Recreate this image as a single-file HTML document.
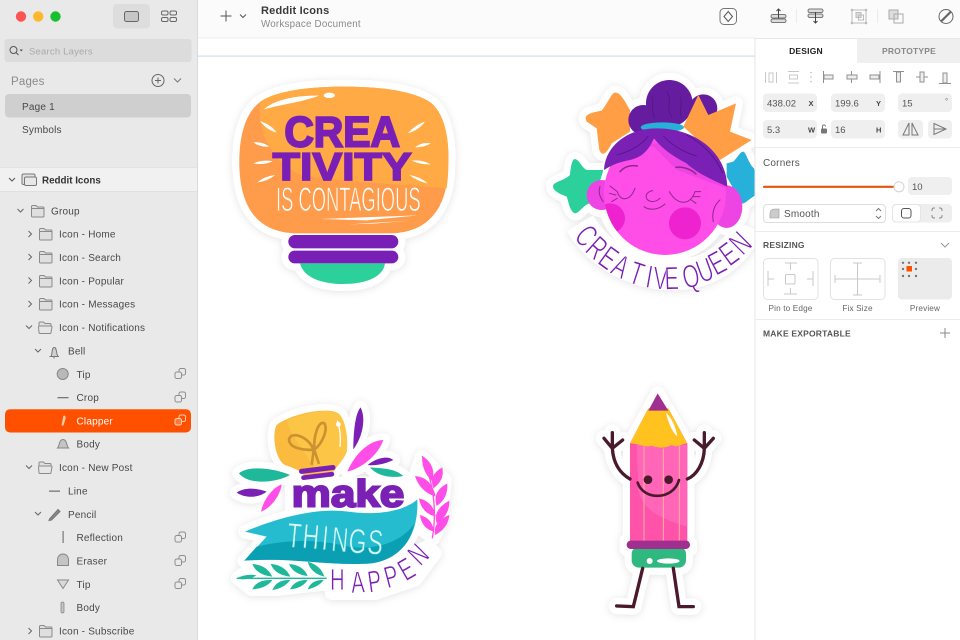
<!DOCTYPE html>
<html><head><meta charset="utf-8"><title>Reddit Icons</title>
<style>
html,body{margin:0;padding:0;background:#fff;width:960px;height:640px;overflow:hidden}
svg{display:block;font-family:"Liberation Sans",sans-serif;filter:blur(.3px)}
.r{font-size:10px;fill:#484848;letter-spacing:.2px}
.s{font-size:9.5px;fill:#555}
.cap{font-size:8.5px;fill:#555;font-weight:bold;letter-spacing:.2px}
.lb{font-size:8.2px;fill:#666;letter-spacing:.15px}
</style></head><body>
<svg width="960" height="640" viewBox="0 0 960 640" xmlns="http://www.w3.org/2000/svg">
<defs>
<g id="f"><path d="M.5 11V1.5a1 1 0 0 1 1-1h3.500l1.500 1.500h5.500a1 1 0 0 1 1 1V11a1 1 0 0 1-1 1H1.500a1 1 0 0 1-1-1z" fill="#dfdfdf" stroke="#8a8a8a"/><path d="M.5 3.500H13" stroke="#8a8a8a"/></g>
<g id="fo"><path d="M1 11V1.500a1 1 0 0 1 1-1h3.500l1.500 1.500h5a1 1 0 0 1 1 1v1" fill="#dfdfdf" stroke="#8a8a8a"/><path d="M.5 5.500a1 1 0 0 1 1-1h11.500a1 1 0 0 1 1 1L13 11a1 1 0 0 1-1 1H2a1 1 0 0 1-1-1z" fill="#e6e6e6" stroke="#8a8a8a"/></g>
<g id="c" fill="none" stroke="#8e8e8e"><rect x="4.500" y=".5" width="6.500" height="6.500" rx="1.800"/><rect x=".5" y="4" width="6.500" height="6.500" rx="1.800" fill="#e9e9e9"/></g>
<filter id="sh" x="-20%" y="-20%" width="140%" height="140%"><feDropShadow dx="0" dy="3" stdDeviation="12" flood-color="#000" flood-opacity=".11"/></filter>

<g id="s1shape">
<path d="M430 80C530 80 640 90 695 130C735 165 748 240 745 310C745 440 690 518 570 520H290C170 518 122 440 118 320C116 230 135 165 175 130C225 92 330 80 430 80Z"/>
<rect x="265" y="525" width="330" height="40" rx="20"/><rect x="265" y="572" width="330" height="38" rx="19"/>
<path d="M300 610H555C550 650 500 672 430 672C360 672 310 650 300 610Z"/>
</g>
<g id="s2shape">
<path d="M258 98C275 100 290 135 300 150L300 215L245 250C225 290 215 285 208 270L200 205L170 185C160 165 175 160 215 152C240 120 245 95 258 98Z"/>
<circle cx="418" cy="130" r="70"/><circle cx="340" cy="180" r="45"/><circle cx="520" cy="145" r="42"/>
<path d="M505 105L535 165L618 130L600 215L665 240L570 300L460 200Z"/>
<path d="M640 275C650 280 655 310 672 325L690 400C660 410 645 435 635 430L590 350V310L610 305C625 290 630 275 640 275Z"/>
<path d="M135 297C150 300 155 325 172 330H220L190 430C165 425 150 460 135 460C118 455 115 420 110 410C85 400 65 390 70 375C75 365 105 360 120 345C122 325 125 297 135 297Z"/>
<ellipse cx="405" cy="395" rx="185" ry="190"/><circle cx="215" cy="405" r="45"/><ellipse cx="590" cy="440" rx="47" ry="64"/>
<path d="M150 490C220 610 350 645 430 645C520 645 610 600 655 500" fill="none" stroke-width="92"/>
</g>
<g id="s3shape">
<path d="M185 105C230 70 340 50 370 70C395 90 400 160 395 185C385 215 355 235 350 260L270 265C265 245 250 240 210 225C180 210 170 130 185 105Z"/>
<path d="M437 52C455 90 440 145 415 178C415 130 420 70 437 52Z"/>
<path d="M397 245C420 190 465 150 505 150C490 195 440 235 397 245Z"/>
<path d="M458 225C480 205 520 195 535 210C510 222 480 228 458 225Z"/>
<path d="M465 232C500 235 540 235 565 258C530 265 490 260 465 232Z"/>
<path d="M72 250C100 225 180 235 225 255C180 280 100 285 72 250Z"/>
<path d="M65 308C90 290 130 295 155 305C130 325 90 325 65 308Z"/>
<path d="M230 280H570V360H230Z"/>
<path d="M90 425C170 390 300 350 400 365C470 375 560 370 607 328C610 400 590 470 520 500C470 540 300 500 88 512L155 440Z"/>
<path d="M620 200L690 270L680 390L655 445L600 400V260Z"/>
<path d="M68 565L120 525H330L340 580L180 598H110Z"/>
<path d="M345 535H500L640 470L660 490L600 570L480 610H350Z"/>
</g>
<g id="s4shape">
<path d="M233 40L322 190V490H330V507H318V540Q318 563 295 563H178Q155 563 155 540V507H140V482H150V190Z"/>
<path d="M150 297C120 280 100 250 97 205M97 205L72 175M97 205L97 158M97 205L128 180M322 297C350 285 372 250 373 205M373 205L343 180M373 205L373 158M373 205L400 175M188 563L160 680L110 678M280 563L297 680L340 680" fill="none" stroke-width="48"/>
</g>
</defs>

<!-- canvas -->
<rect width="960" height="640" fill="#fff"/>
<rect x="198" y="0" width="762" height="38" fill="#fbfbfb"/>
<rect x="198" y="37.500" width="557" height="1" fill="#ededed"/>
<rect x="198" y="55.500" width="557" height="1.200" fill="#cfdfec"/>

<!-- Sticker 1 -->
<g transform="translate(200 60) scale(.3333)">
<g fill="#fff" stroke="#fff" stroke-width="42" stroke-linejoin="round" filter="url(#sh)"><use href="#s1shape"/></g>
<path d="M430 80C530 80 640 90 695 130C735 165 748 240 745 310C745 440 690 518 570 520H290C170 518 122 440 118 320C116 230 135 165 175 130C225 92 330 80 430 80Z" fill="#fe9c4b"/>
<path d="M182 124C230 92 330 80 430 80C530 80 640 90 695 130C735 165 748 240 745 310C745 340 743 365 740 385C600 372 450 368 300 345C200 290 170 200 182 124Z" fill="#ffaa45"/>
<path d="M192 148C220 120 290 105 358 107C310 125 240 135 192 148Z" fill="#fff"/>
<ellipse cx="388" cy="106" rx="17" ry="8" fill="#fff"/>
<g fill="#fff">
<path d="M180 183Q215 195 230 218Q200 210 180 183Z"/><path d="M160 247Q190 245 208 260Q180 262 160 247Z"/><path d="M160 310Q190 298 218 304Q190 316 160 310Z"/><path d="M172 367Q195 348 226 345Q200 365 172 367Z"/>
<path d="M675 185Q645 195 623 220Q655 212 675 185Z"/><path d="M693 250Q665 245 645 262Q672 262 693 250Z"/><path d="M693 313Q665 298 635 302Q665 315 693 313Z"/><path d="M683 370Q660 350 628 345Q655 365 683 370Z"/>
</g>
<text x="253" y="260" font-size="128" font-weight="bold" fill="#7a1fb5" stroke="#7a1fb5" stroke-width="6" textLength="347" lengthAdjust="spacingAndGlyphs">CREA</text>
<text x="218" y="360" font-size="118" font-weight="bold" fill="#7a1fb5" stroke="#7a1fb5" stroke-width="5" textLength="417" lengthAdjust="spacingAndGlyphs">TIVITY</text>
<text x="228" y="453" font-size="104" fill="#fff" stroke="#fe9c4b" stroke-width="2.500" textLength="434" lengthAdjust="spacingAndGlyphs">IS CONTAGIOUS</text>
<path d="M362 477L655 466L500 481ZM447 493L630 482L520 491Z" fill="#fff"/>
<rect x="265" y="525" width="330" height="40" rx="20" fill="#7a1fb5"/><rect x="265" y="572" width="330" height="38" rx="19" fill="#7a1fb5"/>
<path d="M300 610H555C550 650 500 672 430 672C360 672 310 650 300 610Z" fill="#2bd09b"/>
</g>

<!-- Sticker 2 -->
<g transform="translate(530 60) scale(.3333)">
<g fill="#fff" stroke="#fff" stroke-width="42" stroke-linejoin="round" filter="url(#sh)"><use href="#s2shape"/></g>
<path d="M258 98C275 100 290 135 300 150L300 215L245 250C225 290 215 285 208 270L200 205L170 185C160 165 175 160 215 152C240 120 245 95 258 98Z" fill="#ff9e45"/>
<path d="M640 275C650 280 655 310 672 325L690 400C660 410 645 435 635 430L590 350V310L610 305C625 290 630 275 640 275Z" fill="#27b0d9"/>
<path d="M135 297C150 300 155 325 172 330H220L190 430C165 425 150 460 135 460C118 455 115 420 110 410C85 400 65 390 70 375C75 365 105 360 120 345C122 325 125 297 135 297Z" fill="#2bd09b"/>
<circle cx="418" cy="130" r="70" fill="#661c9e"/><circle cx="340" cy="180" r="45" fill="#661c9e"/><circle cx="520" cy="145" r="42" fill="#661c9e"/>
<g fill="none" stroke="#521685" stroke-width="2.500"><path d="M365 110C375 130 360 150 375 175M410 95C430 120 405 140 425 170M450 110C460 130 445 150 455 175"/></g>
<path d="M505 105L535 165L618 130L600 215L665 240L570 300L460 200Z" fill="#ff9e45"/>
<ellipse cx="397" cy="202" rx="65" ry="15" fill="#29b0d8"/>
<circle cx="215" cy="405" r="45" fill="#ee44e4"/><ellipse cx="590" cy="440" rx="47" ry="64" fill="#ee44e4"/>
<ellipse cx="405" cy="400" rx="183" ry="185" fill="#ff4de8"/>
<path d="M235 315L370 258L440 330L590 385L500 250H300Z" fill="#ee44e4"/>
<clipPath id="fc"><ellipse cx="405" cy="400" rx="183" ry="185"/></clipPath>
<g clip-path="url(#fc)"><circle cx="240" cy="475" r="45" fill="#ee22cf"/></g>
<circle cx="465" cy="490" r="48" fill="#ee22cf"/>
<path d="M222 330C225 260 290 205 380 205C500 205 590 280 592 380C560 365 500 340 470 310C430 290 395 265 372 235C355 270 340 290 300 300C270 305 245 315 222 330Z" fill="#7a20b5"/>
<g fill="none" stroke="#521685" stroke-width="2.500"><path d="M260 285C300 275 335 255 355 228M400 228C430 260 470 280 500 288M470 225C510 245 560 290 578 340"/></g>
<g fill="none" stroke="#8a2a90" stroke-width="3" stroke-linecap="round">
<path d="M262 395C270 425 300 425 315 385M418 395C440 435 480 440 495 395M262 395L240 378M258 405L238 400M262 415L245 425M495 395L512 395M490 410L510 410M484 420L498 430"/>
<path d="M270 335C285 318 305 315 322 318M438 322C455 320 480 325 498 342" stroke-width="4.500"/>
<path d="M368 392C345 395 340 420 365 425C375 425 385 420 390 415M342 440C360 452 385 450 405 432M210 380C205 395 208 410 220 425M570 420C552 435 545 460 550 485"/>
</g>
<g font-size="98" fill="#7a1fb5" stroke="#fff" stroke-width="2.500" text-anchor="middle">
<text transform="translate(168 528) rotate(48) scale(.66 1)" y="32">C</text>
<text transform="translate(200 565) rotate(42) scale(.66 1)" y="32">R</text>
<text transform="translate(235 595) rotate(36) scale(.66 1)" y="32">E</text>
<text transform="translate(272 620) rotate(28) scale(.66 1)" y="32">A</text>
<text transform="translate(320 642) rotate(18) scale(.66 1)" y="32">T</text>
<text transform="translate(358 652) rotate(10) scale(.66 1)" y="32">I</text>
<text transform="translate(392 656) rotate(3) scale(.66 1)" y="32">V</text>
<text transform="translate(425 656) rotate(-2) scale(.66 1)" y="32">E</text>
<text transform="translate(483 650) rotate(-12) scale(.66 1)" y="32">Q</text>
<text transform="translate(525 632) rotate(-20) scale(.66 1)" y="32">U</text>
<text transform="translate(562 610) rotate(-28) scale(.66 1)" y="32">E</text>
<text transform="translate(597 583) rotate(-36) scale(.66 1)" y="32">E</text>
<text transform="translate(632 550) rotate(-45) scale(.66 1)" y="32">N</text>
</g>
</g>

<!-- Sticker 3 -->
<g transform="translate(215 390) scale(.3333)">
<g fill="#fff" stroke="#fff" stroke-width="40" stroke-linejoin="round" filter="url(#sh)"><use href="#s3shape"/></g>
<path d="M185 105C230 70 340 50 370 70C395 90 400 160 395 185C385 215 355 235 350 260L270 265C265 245 250 240 210 225C180 210 170 130 185 105Z" fill="#fabb3e"/>
<path d="M215 90C270 70 340 55 370 70C395 90 400 160 395 185C385 215 355 235 350 260H310C300 220 230 150 215 90Z" fill="#fcc545"/>
<path d="M367 92Q380 130 375 170" stroke="#fff" stroke-width="4" fill="none"/><circle cx="370" cy="103" r="7" fill="#fff"/>
<g fill="none" stroke="#cc9130" stroke-width="8"><path d="M290 225L296 182C285 140 225 120 222 150C225 180 280 180 296 180C320 165 340 120 328 100C310 90 295 140 298 180L312 222"/></g>
<g fill="#7a20b5" transform="rotate(-7 305 240)"><rect x="252" y="231" width="110" height="15" rx="7"/><rect x="256" y="251" width="100" height="14" rx="7"/></g>
<path d="M437 52C455 90 440 145 415 178C415 130 420 70 437 52Z" fill="#7a20b5"/>
<path d="M397 245C420 190 465 150 505 150C490 195 440 235 397 245Z" fill="#ff4de8"/>
<path d="M458 225C480 205 520 195 535 210C510 222 480 228 458 225Z" fill="#7a20b5"/>
<path d="M465 232C500 235 540 235 565 258C530 265 490 260 465 232Z" fill="#1fb89a"/>
<path d="M72 250C100 225 180 235 225 255C180 280 100 285 72 250Z" fill="#1fb89a"/>
<path d="M65 308C90 290 130 295 155 305C130 325 90 325 65 308Z" fill="#7a20b5"/>
<path d="M138 365C145 330 170 295 200 283C195 320 165 355 138 365Z" fill="#ff4de8"/>
<text x="230" y="350" font-size="114" font-weight="bold" fill="#7a20b5" stroke="#7a20b5" stroke-width="6" textLength="338" lengthAdjust="spacingAndGlyphs">make</text>
<path d="M90 425C170 390 300 350 400 365C470 375 560 370 607 328C610 400 590 470 520 505C430 535 300 500 88 512L155 440Z" fill="#26bcd0"/>
<path d="M88 512L125 470C230 445 320 450 400 470C470 482 560 460 598 400C585 465 540 510 470 520C350 530 220 500 88 512Z" fill="#0a9fb3"/>
<g font-size="104" fill="#d8f7f5" stroke="#26bcd0" stroke-width="2" text-anchor="middle">
<text transform="translate(235 472) rotate(5) scale(.66 1)">T</text>
<text transform="translate(285 475) rotate(5) scale(.66 1)">H</text>
<text transform="translate(328 479) rotate(5) scale(.66 1)">I</text>
<text transform="translate(372 484) rotate(5) scale(.66 1)">N</text>
<text transform="translate(425 489) rotate(5) scale(.66 1)">G</text>
<text transform="translate(478 492) rotate(5) scale(.66 1)">S</text>
</g>
<g font-size="92" fill="#7a20b5" stroke="#fff" stroke-width="2" text-anchor="middle">
<text transform="translate(367 600) scale(.66 1)">H</text>
<text transform="translate(430 608) rotate(-3) scale(.66 1)">A</text>
<text transform="translate(483 605) rotate(-8) scale(.66 1)">P</text>
<text transform="translate(537 590) rotate(-15) scale(.66 1)">P</text>
<text transform="translate(590 565) rotate(-30) scale(.66 1)">E</text>
<text transform="translate(632 515) rotate(-45) scale(.66 1)">N</text>
</g>
<g fill="#ff4de8">
<path d="M652 445C665 370 660 290 622 198" fill="none" stroke="#ff4de8" stroke-width="4"/>
<path d="M622 198Q665 225 652 275Q618 240 622 198Z"/><path d="M682 232Q690 270 655 295Q640 255 682 232Z"/>
<path d="M600 258Q650 262 662 320Q615 305 600 258Z"/><path d="M697 280Q700 325 665 348Q650 305 697 280Z"/>
<path d="M612 325Q655 335 662 380Q620 370 612 325Z"/><path d="M703 332Q705 375 665 400Q652 360 703 332Z"/>
<path d="M615 375Q652 385 657 425Q620 415 615 375Z"/><path d="M703 375Q700 415 660 435Q652 395 703 375Z"/>
</g>
<g fill="#1fb89a">
<path d="M65 565H335" stroke="#1fb89a" stroke-width="4"/><path d="M65 565Q95 550 125 556Q95 574 65 565Z"/>
<path d="M112 522Q155 525 172 560Q125 555 112 522Z"/><path d="M167 522Q210 525 226 560Q180 555 167 522Z"/><path d="M222 522Q265 525 278 558Q235 553 222 522Z"/><path d="M278 515Q318 527 328 560Q287 550 278 515Z"/>
<path d="M112 598Q155 595 172 570Q125 568 112 598Z"/><path d="M172 600Q207 595 226 570Q185 568 172 600Z"/><path d="M225 598Q262 595 278 570Q240 568 225 598Z"/><path d="M278 598Q312 590 326 570Q290 568 278 598Z"/>
</g>
</g>

<!-- Sticker 4 -->
<g transform="translate(580 380) scale(.3333)">
<g fill="#fff" stroke="#fff" stroke-width="42" stroke-linejoin="round" stroke-linecap="round" filter="url(#sh)"><use href="#s4shape"/></g>
<path d="M205 85H265L322 190V490H150V190Z" fill="#ff53a9"/>
<path d="M170 195H322V440C260 420 190 400 175 330Z" fill="#ff66b8"/>
<path d="M205 85H265L322 190C305 190 295 205 275 195C255 205 235 205 215 197C195 205 175 190 150 190Z" fill="#ffc21f"/>
<path d="M233 40L265 92H205Z" fill="#a0308f"/>
<path d="M258 98Q285 125 292 170Q270 150 258 98Z" fill="#fff"/>
<path d="M192 200V482M250 205V482M298 198V482" stroke="#ffb2a0" stroke-width="3" fill="none"/>
<rect x="155" y="500" width="163" height="63" rx="22" fill="#2fb87f"/>
<rect x="140" y="482" width="190" height="25" rx="12" fill="#a0308f"/>
<circle cx="209" cy="543" r="9" fill="#fff"/><ellipse cx="265" cy="543" rx="34" ry="8" fill="#fff"/>
<circle cx="204" cy="299" r="13" fill="#4a1a2c"/><circle cx="266" cy="299" r="13" fill="#4a1a2c"/>
<g fill="none" stroke="#4a1a2c" stroke-width="10" stroke-linecap="round">
<path d="M173 308C190 362 280 362 297 300" stroke-width="8"/>
<path d="M150 297C120 280 100 250 97 205M97 205L72 175M97 205L97 158M97 205L128 180M322 297C350 285 372 250 373 205M373 205L343 180M373 205L373 158M373 205L400 175M188 565L160 680L110 678M280 565L297 680L340 680"/>
</g>
</g>

<!-- top bar icons -->
<g fill="none" stroke="#5e5e5e" stroke-width="1">
<path d="M220.500 16H231.500M226 10.500V21.500" stroke="#555"/>
<path d="M240 14.500L243 17.500L246 14.500" stroke="#555"/>
<rect x="720" y="8.500" width="16.500" height="16" rx="4" stroke="#777"/>
<path d="M728.200 11.500L732.500 16.500L728.200 21.500L724 16.500Z" stroke="#555"/>
<g stroke="#777"><rect x="771" y="19" width="15" height="3.500" rx="1.700" fill="#ddd"/><rect x="771" y="14.500" width="15" height="3.500" rx="1.700" fill="#ddd"/></g>
<path d="M778.500 9V18M776.500 11L778.500 9L780.500 11" stroke="#444"/>
<g stroke="#777"><rect x="808" y="9" width="15" height="3.500" rx="1.700" fill="#ddd"/><rect x="808" y="14" width="15" height="3.500" rx="1.700" fill="#ddd"/></g>
<path d="M815.500 12V23M813.500 21L815.500 23L817.500 21" stroke="#444"/>
<g stroke="#bbb"><rect x="852" y="10" width="14" height="13"/><rect x="856" y="12.500" width="5" height="5" fill="#ddd"/><rect x="858.500" y="15" width="5" height="5"/></g>
<g fill="#bbb" stroke="none"><circle cx="852" cy="10" r="1.300"/><circle cx="866" cy="10" r="1.300"/><circle cx="852" cy="23" r="1.300"/><circle cx="866" cy="23" r="1.300"/></g>
<g stroke="#aaa"><rect x="889" y="10" width="9" height="9" fill="#ddd"/><rect x="894" y="14" width="9" height="9"/></g>
<circle cx="946" cy="16.500" r="7" stroke="#666"/><path d="M941 21.500L951 11.500" stroke="#666" stroke-width="2.200"/>
<path d="M796.500 9V23M877.500 9V23" stroke="#ececec"/>
</g>
<text x="261" y="14" font-size="11" font-weight="bold" fill="#3a3a3a" letter-spacing=".2">Reddit Icons</text>
<text x="261" y="27" font-size="9.800" fill="#8a8a8a" letter-spacing=".2">Workspace Document</text>

<!-- left sidebar -->
<rect x="0" y="0" width="197.500" height="640" fill="#e9e9e9"/>
<rect x="197" y="0" width="1" height="640" fill="#dadada"/>
<circle cx="21" cy="16.500" r="5.200" fill="#fd5354"/><circle cx="38.200" cy="16.500" r="5.200" fill="#fdb82b"/><circle cx="55.500" cy="16.500" r="5.200" fill="#16c02f"/>
<rect x="113" y="4" width="37" height="24.500" rx="4" fill="#dddddd"/>
<rect x="124.500" y="11.500" width="14" height="10" rx="2" fill="#c6c6c6" stroke="#666"/>
<g fill="none" stroke="#666"><rect x="161.500" y="11" width="6.500" height="4" rx="1.500"/><rect x="170" y="11" width="6.500" height="4" rx="1.500"/><rect x="161.500" y="17.500" width="6.500" height="4" rx="1.500"/><rect x="170" y="17.500" width="6.500" height="4" rx="1.500"/></g>
<rect x="4.500" y="39" width="187" height="23" rx="3" fill="#dcdcdc"/>
<circle cx="13.500" cy="50" r="3.500" fill="none" stroke="#555"/><path d="M16 52.500L18.500 55" stroke="#555"/><path d="M19.500 49.500H23L21.200 51.500Z" fill="#555"/>
<text x="29" y="54.500" font-size="9.500" fill="#aaa" letter-spacing=".2">Search Layers</text>
<text x="11" y="85" font-size="11.500" fill="#8a8a8a" letter-spacing=".2">Pages</text>
<circle cx="158" cy="80.500" r="6" fill="none" stroke="#666"/><path d="M155 80.500H161M158 77.500V83.500" stroke="#666"/>
<path d="M174 78.500L177.500 82L181 78.500" fill="none" stroke="#777"/>
<rect x="5" y="94" width="186" height="23.500" rx="4" fill="#cfcfcf"/>
<text x="22" y="110" class="r">Page 1</text>
<text x="22" y="133" class="r">Symbols</text>
<rect x="0" y="167.500" width="197" height="24" fill="#f1f1f1"/>
<rect x="0" y="167" width="197" height=".8" fill="#dedede"/><rect x="0" y="191" width="197" height=".8" fill="#dedede"/>
<path d="M9 178L12 181L15 178" fill="none" stroke="#555"/>
<rect x="22" y="174" width="13" height="10.500" rx="1.500" fill="#e2e2e2" stroke="#777"/><rect x="24.500" y="177" width="12" height="8.500" rx="1.500" fill="#e8e8e8" stroke="#777"/>
<text x="42" y="183.500" font-size="9.800" font-weight="bold" fill="#333">Reddit Icons</text>

<rect x="5" y="409.200" width="186" height="23.300" rx="5" fill="#ff5000"/>

<g fill="none" stroke="#666" stroke-width="1">
<path d="M17.500 209L20.500 212L23.500 209"/>
<path d="M28.500 231L31.500 234L28.500 237M28.500 254L31.500 257L28.500 260M28.500 277.500L31.500 280.500L28.500 283.500M28.500 301L31.500 304L28.500 307M28.500 628L31.500 631L28.500 634"/>
<path d="M26 325.500L29 328.500L32 325.500M35 349L38 352L41 349M26 465.500L29 468.500L32 465.500M35 512L38 515L41 512"/>
</g>
<use href="#f" x="31" y="205"/>
<use href="#f" x="39" y="228"/><use href="#f" x="39" y="251"/><use href="#f" x="39" y="275"/><use href="#f" x="39" y="298"/>
<use href="#fo" x="38" y="321.500"/><use href="#fo" x="38" y="461.500"/><use href="#f" x="39" y="625"/>
<text x="51" y="214.500" class="r">Group</text>
<text x="59" y="237.500" class="r">Icon - Home</text>
<text x="59" y="261" class="r">Icon - Search</text>
<text x="59" y="284.500" class="r">Icon - Popular</text>
<text x="59" y="307.500" class="r">Icon - Messages</text>
<text x="59" y="331" class="r">Icon - Notifications</text>
<text x="68" y="354.500" class="r">Bell</text>
<text x="76.500" y="378" class="r">Tip</text>
<text x="76.500" y="401" class="r">Crop</text>
<text x="76.500" y="424.500" class="r" style="fill:#fff">Clapper</text>
<text x="76.500" y="447.500" class="r">Body</text>
<text x="59" y="471" class="r">Icon - New Post</text>
<text x="68" y="494.500" class="r">Line</text>
<text x="68" y="518" class="r">Pencil</text>
<text x="76.500" y="541" class="r">Reflection</text>
<text x="76.500" y="564.500" class="r">Eraser</text>
<text x="76.500" y="588" class="r">Tip</text>
<text x="76.500" y="611" class="r">Body</text>
<text x="59" y="634.500" class="r">Icon - Subscribe</text>
<!-- layer icons -->
<path d="M49.500 356.500H59M51 356.500C52.500 354 51.500 347.500 54.300 347.500C57 347.500 56 354 58 356.500M54 356.500V358.500" fill="#d0d0d0" stroke="#777"/>
<circle cx="62.700" cy="374" r="5.500" fill="#b9b9b9" stroke="#888"/>
<rect x="57.500" y="397" width="11" height="1.300" fill="#777"/>
<path d="M64 415.500Q66 415.500 65.500 419L63.500 425.500Q62 426 61.500 425L63 418Q63 416 64 415.500Z" fill="#ffc9a8"/>
<path d="M57.500 448H68.500C66.500 446 67 439.500 63 439.500C59 439.500 59.500 446 57.500 448Z" fill="#c4c4c4" stroke="#888"/>
<rect x="49" y="490.500" width="11" height="1.300" fill="#777"/>
<path d="M49.500 519L58 509.500L60 511.500L51.500 520L49 520.500Z" fill="#888" stroke="#777"/>
<rect x="62.500" y="531" width="1.200" height="12" fill="#777"/>
<path d="M57.500 565.500V560C57.500 552 68.500 552 68.500 560V565.500Z" fill="#c4c4c4" stroke="#888"/>
<path d="M57.500 580H68.500L63 588.500Z" fill="#dadada" stroke="#888"/>
<rect x="61" y="602" width="3" height="11" rx="1.500" fill="#c4c4c4" stroke="#888" stroke-width=".8"/>
<use href="#c" x="174.500" y="368"/><use href="#c" x="174.500" y="391.500"/><use href="#c" x="174.500" y="531.500"/><use href="#c" x="174.500" y="555"/><use href="#c" x="174.500" y="578"/>
<g fill="none" stroke="#ffd0b5"><rect x="179" y="415" width="6.500" height="6.500" rx="1.800"/><rect x="175" y="418.500" width="6.500" height="6.500" rx="1.800" fill="#ff7a3a"/></g>

<!-- right panel -->
<rect x="755" y="38" width="205" height="602" fill="#fff"/>
<rect x="754.500" y="38" width="1" height="602" fill="#e6e6e6"/>
<rect x="857" y="39" width="103" height="24" fill="#efefef"/>
<rect x="755" y="38" width="205" height="1" fill="#e8e8e8"/>
<text x="806" y="54" text-anchor="middle" class="cap" style="fill:#222">DESIGN</text>
<text x="909" y="54" text-anchor="middle" class="cap" style="fill:#888">PROTOTYPE</text>
<g fill="none" stroke="#c8c8c8"><path d="M765.500 72V83M776.500 72V83"/><rect x="769" y="73" width="4" height="9"/><path d="M788 71.500H799M788 83H799"/><rect x="789.500" y="75" width="8" height="4"/></g>
<g fill="#bbb"><circle cx="811" cy="72.500" r=".8"/><circle cx="811" cy="77" r=".8"/><circle cx="811" cy="81.500" r=".8"/></g>
<g fill="none" stroke="#909090"><path d="M823.500 71V83"/><rect x="824" y="75" width="9" height="4" fill="#eee"/><path d="M851.500 71V83"/><rect x="847" y="75" width="10" height="4" fill="#eee"/><path d="M880 71V83"/><rect x="870" y="75" width="9" height="4" fill="#eee"/><path d="M893 71.500H904"/><rect x="896.500" y="72" width="4" height="10" fill="#eee"/><path d="M916 77H928"/><rect x="920" y="72" width="4" height="10" fill="#eee"/><path d="M939 83.500H951"/><rect x="943" y="73" width="4" height="10" fill="#eee"/></g>
<g fill="#efefef">
<rect x="763" y="93.500" width="54" height="18.500" rx="4"/><rect x="831" y="93.500" width="54" height="18.500" rx="4"/><rect x="898" y="93.500" width="54" height="18.500" rx="4"/>
<rect x="763" y="120" width="54" height="18.500" rx="4"/><rect x="831" y="120" width="54" height="18.500" rx="4"/><rect x="898" y="120" width="25" height="18.500" rx="4"/><rect x="928" y="120" width="24" height="18.500" rx="4"/>
<rect x="908" y="177" width="44" height="18" rx="4"/>
</g>
<text x="767" y="106.500" class="s">438.02</text><text x="835" y="106.500" class="s">199.6</text><text x="902" y="106.500" class="s">15</text>
<text x="767" y="133" class="s">5.3</text><text x="835" y="133" class="s">16</text><text x="912" y="190" class="s">10</text>
<g font-size="7.500" font-weight="bold" fill="#444"><text x="808.500" y="106">X</text><text x="876" y="106">Y</text><text x="808" y="132.500">W</text><text x="876" y="132.500">H</text></g>
<text x="945" y="104" font-size="8" fill="#777">°</text>
<rect x="821" y="128.500" width="6" height="5" rx="1" fill="#777"/><path d="M822.500 128.500V126.500A1.500 1.500 0 0 1 825.500 126.500" fill="none" stroke="#777"/>
<g fill="none" stroke="#777"><path d="M909 135L909 123L903 135ZM912 123V135H918Z"/><path d="M934 123.500L946 129L934 134.500ZM934 129H946"/></g>
<rect x="755" y="147" width="205" height="1" fill="#ececec"/>
<text x="763" y="166" font-size="10" fill="#555" letter-spacing=".2">Corners</text>
<rect x="763" y="185.700" width="135" height="2.200" rx="1" fill="#e8530f"/>
<circle cx="899" cy="186.800" r="5" fill="#fff" stroke="#d4d4d4"/>
<rect x="763.500" y="204.500" width="122" height="18" rx="3.500" fill="#fff" stroke="#ddd"/>
<path d="M770 218V213Q770 209 775 209H779V218Z" fill="#ccc" stroke="#999" stroke-width=".6"/>
<text x="784" y="217" font-size="10" fill="#555" letter-spacing=".2">Smooth</text>
<path d="M876 211L878.500 208.500L881 211M876 216L878.500 218.500L881 216" fill="none" stroke="#777"/>
<rect x="892" y="204" width="60" height="18.500" rx="4" fill="#eee"/>
<rect x="892.500" y="204.500" width="28" height="17.500" rx="3.500" fill="#fff" stroke="#e4e4e4"/>
<rect x="901.500" y="208.500" width="9.500" height="9.500" rx="2.500" fill="none" stroke="#555"/>
<path d="M932 211V210Q932 208 934 208H935M939 208H940Q942 208 942 210V211M942 215V216Q942 218 940 218H939M935 218H934Q932 218 932 216V215" fill="none" stroke="#888"/>
<rect x="755" y="231" width="205" height="1" fill="#ececec"/>
<text x="763" y="248" class="cap">RESIZING</text>
<path d="M941 243L945 247L949 243" fill="none" stroke="#999"/>
<rect x="763.500" y="258.500" width="54.500" height="41" rx="4" fill="#fff" stroke="#e2e2e2"/>
<rect x="830.500" y="258.500" width="54.500" height="41" rx="4" fill="#fff" stroke="#e2e2e2"/>
<rect x="898" y="258" width="54" height="41.500" rx="4" fill="#ebebeb"/>
<g fill="none" stroke="#c8c8c8">
<rect x="785.500" y="274.500" width="9.500" height="9.500" rx="1"/>
<path d="M785 263H797M790.500 263V270M768 271V286M768 279H774M813 271V286M813 279H807M784 294H797M790.500 294V288"/>
<path d="M835 279H880M835 275V283M880 275V283M857.500 263V295M853 263H862M853 295H862"/>
</g>
<rect x="906.500" y="266" width="5.500" height="5.500" fill="#ff5000"/>
<g fill="#777"><circle cx="903" cy="262.800" r="1.200"/><circle cx="909" cy="262.800" r="1.200"/><circle cx="916" cy="262.800" r="1.200"/><circle cx="903" cy="269" r="1.200"/><circle cx="916" cy="269" r="1.200"/><circle cx="903" cy="276" r="1.200"/><circle cx="909" cy="276" r="1.200"/><circle cx="916" cy="276" r="1.200"/></g>
<text x="790.500" y="311" text-anchor="middle" class="lb">Pin to Edge</text>
<text x="857.500" y="311" text-anchor="middle" class="lb">Fix Size</text>
<text x="925" y="311" text-anchor="middle" class="lb">Preview</text>
<rect x="755" y="319" width="205" height="1" fill="#ececec"/>
<text x="763" y="336.500" class="cap">MAKE EXPORTABLE</text>
<path d="M940 333H950M945 328V338" stroke="#888" fill="none"/>
</svg>
</body></html>
